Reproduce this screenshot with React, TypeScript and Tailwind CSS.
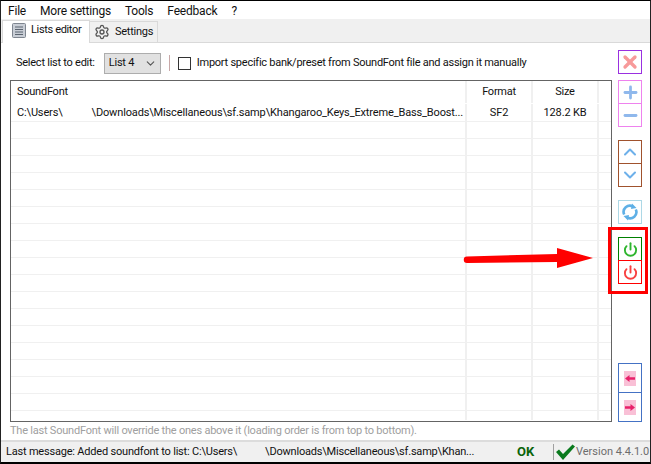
import { ChevronDown, ChevronUp, Plus, Minus, X, Power, Settings } from "lucide-react";
import type { ReactNode } from "react";

const emptyRows = Array.from({ length: 17 }, (_, i) => i);

function Row({ name, format, size, height = "h-[17px]", line = "border-[#f0f0f0]", text = "" }: { name?: ReactNode; format?: string; size?: string; height?: string; line?: string; text?: string }) {
  return (
    <div className={`flex shrink-0 ${height} border-b ${line}`}>
      <div className={`flex w-[456px] items-center overflow-hidden whitespace-nowrap border-r-2 border-[#f0f0f0] pl-[6px] ${text}`}>{name}</div>
      <div className={`flex w-[66px] items-center justify-center border-r-2 border-[#f0f0f0] ${text}`}>{format}</div>
      <div className={`flex w-[66px] items-center justify-center border-r-2 border-[#f0f0f0] ${text}`}>{size}</div>
      <div className="flex-1" />
    </div>
  );
}

function SideButton({ border, children, className = "h-6" }: { border: string; children: ReactNode; className?: string }) {
  return (
    <div className={`flex w-6 items-center justify-center border ${border} ${className}`}>{children}</div>
  );
}

function PinkArrow({ d }: { d: string }) {
  return (
    <svg width="12" height="15" viewBox="0 0 12 15" className="bg-[#f9c0d6]">
      <path d={d} fill="#e8206a" />
    </svg>
  );
}

export default function App() {
  return (
    <div className="relative flex h-[464px] w-[651px] flex-col overflow-hidden border-x border-t border-b-2 border-x-[#222] border-t-black border-b-black bg-white font-['Roboto',sans-serif] text-[11px] tracking-[-0.25px] text-[#111]">
      <div className="flex h-[18px] shrink-0 items-center pl-[7px] pt-[2px] text-[12px] tracking-[-0.2px]">
        <span>File</span>
        <span className="ml-[14px]">More settings</span>
        <span className="ml-[14px]">Tools</span>
        <span className="ml-[14px]">Feedback</span>
        <span className="ml-[14px]">?</span>
      </div>

      <div className="flex h-[24px] shrink-0 items-end border-b border-[#d9d9d9] bg-[#f0f0f0] pl-[1px]">
        <div className="z-10 -mb-px flex h-[23px] w-[88px] items-center gap-[5px] whitespace-nowrap border border-b-0 border-[#d9d9d9] bg-white pb-[3px] pl-[9px] tracking-[-0.35px]">
          <svg width="14" height="15" viewBox="0 0 14 15" className="shrink-0">
            <rect x="0.5" y="0.5" width="13" height="14" rx="1" fill="#c9ced6" stroke="#7f8690" />
            <path d="M3 4h8M3 6.5h8M3 9h8M3 11.5h8" stroke="#5b6470" />
          </svg>
          <span>Lists editor</span>
        </div>
        <div className="flex h-[21px] w-[68px] items-center gap-[5px] whitespace-nowrap border border-b-0 border-l-0 border-[#d9d9d9] bg-[#f0f0f0] pl-[4px]">
          <Settings size={16} strokeWidth={2} className="shrink-0 text-[#555]" />
          <span>Settings</span>
        </div>
      </div>

      <div className="flex min-h-0 flex-1">
        <div className="flex w-[611px] shrink-0 flex-col pl-[9px]">
          <div className="flex h-[37px] shrink-0 items-center pl-[6px] pt-[3px]">
            <span className="pt-[1px]">Select list to edit:</span>
            <div className="ml-[9px] flex h-[21px] w-[57px] items-center justify-between border border-[#adadad] bg-[#e1e1e1] pl-[4px] pr-[3px]">
              <span>List 4</span>
              <ChevronDown size={13} className="text-[#555]" />
            </div>
            <div className="ml-[8px] h-[16px] w-px bg-[#c8a8a8]" />
            <div className="ml-[8px] h-[13px] w-[13px] border border-[#333] bg-white" />
            <span className="ml-[6px] pt-[1px]">Import specific bank/preset from SoundFont file and assign it manually</span>
          </div>

          <div className="flex h-[342px] w-[602px] shrink-0 flex-col overflow-hidden border border-[#646464]">
            <Row name="SoundFont" format="Format" size="Size" height="h-[23px]" line="border-transparent" text="pt-[1px]" />
            <Row
              name={
                <>
                  <span>C:\Users\</span>
                  <span className="ml-[29px]">\Downloads\Miscellaneous\sf.samp\Khangaroo_Keys_Extreme_Bass_Boost...</span>
                </>
              }
              format="SF2"
              size="128.2 KB"
              height="h-[18px]"
              text="pt-[2px] tracking-[-0.15px]"
            />
            {emptyRows.map((i) => (
              <Row key={i} />
            ))}
            <Row height="flex-1" line="border-transparent" />
          </div>

          <div className="flex flex-1 items-center tracking-[-0.22px] text-[#a0a0a0]">
            The last SoundFont will override the ones above it (loading order is from top to bottom).
          </div>
        </div>

        <div className="flex flex-col pl-[6px] pt-[7px]">
          <SideButton border="border-[#9a30e0]">
            <X size={20} strokeWidth={4} className="text-[#f79a9a]" />
          </SideButton>
          <SideButton border="border-[#ee82ee]" className="mt-[6px] h-6">
            <Plus size={19} strokeWidth={3.5} className="text-[#8fb8ec]" />
          </SideButton>
          <SideButton border="border-[#ee82ee]" className="-mt-px h-6">
            <Minus size={19} strokeWidth={3.5} className="text-[#8fb8ec]" />
          </SideButton>
          <SideButton border="border-[#a0522d]" className="mt-[13px] h-6">
            <ChevronUp size={20} strokeWidth={2.4} className="text-[#6db0ea]" />
          </SideButton>
          <SideButton border="border-[#a0522d]" className="-mt-px h-6">
            <ChevronDown size={20} strokeWidth={2.4} className="text-[#6db0ea]" />
          </SideButton>
          <SideButton border="border-[#add8e6]" className="mt-[13px] h-6">
            <svg width="18" height="18" viewBox="0 0 18 18" fill="none">
              <path d="M3.2 11.5A6.2 6.2 0 0 1 12 3.6" stroke="#5fb0e6" strokeWidth="2.6" />
              <path d="M14.8 6.5A6.2 6.2 0 0 1 6 14.4" stroke="#5fb0e6" strokeWidth="2.6" />
              <path d="M11 0.5L15.5 5L10 6Z" fill="#5fb0e6" />
              <path d="M7 17.5L2.5 13L8 12Z" fill="#5fb0e6" />
            </svg>
          </SideButton>
          <SideButton border="border-[#008000]" className="mt-[13px] h-6">
            <Power size={15} strokeWidth={3} className="text-[#2eb52e]" />
          </SideButton>
          <SideButton border="border-[#ff0000]" className="-mt-px h-6">
            <Power size={15} strokeWidth={3} className="text-[#f84040]" />
          </SideButton>
          <SideButton border="border-[#4472c4]" className="mt-[79px] h-[30px]">
            <PinkArrow d="M1 7.5L5.5 4V6.2H11V8.8H5.5V11Z" />
          </SideButton>
          <SideButton border="border-[#4472c4]" className="-mt-px h-[30px]">
            <PinkArrow d="M11 7.5L6.5 4V6.2H1V8.8H6.5V11Z" />
          </SideButton>
        </div>
      </div>

      <div className="flex h-[22px] shrink-0 items-center whitespace-nowrap border-t-2 border-[#dcdcdc] bg-[#f0f0f0] pl-[5px]">
        <div className="w-[511px] overflow-hidden tracking-[-0.2px]">
          <span>Last message: Added soundfont to list: C:\Users\</span>
          <span className="ml-[28px]">\Downloads\Miscellaneous\sf.samp\Khan...</span>
        </div>
        <span className="w-[36px] text-[13px] font-bold tracking-normal text-[#0a640a]">OK</span>
        <div className="h-[16px] w-px bg-[#a0a0a0]" />
        <svg width="21" height="16" viewBox="0 0 21 16" className="ml-[1px] shrink-0">
          <path d="M1 8L4 5.5L8 10L17.5 0.5L20 2.5L8 16Z" fill="#0a7a1e" />
        </svg>
        <span className="text-[#6d6d6d] tracking-normal">Version 4.4.1.0</span>
      </div>

      {/* annotation drawn over the window */}
      <svg className="absolute left-[462px] top-[245px]" width="134" height="26" viewBox="0 0 134 26">
        <path d="M4 10.5 L94 8 L94 2 L130 12 L94 22 L94 16 L4 17 A3.2 3.2 0 0 1 4 10.5 Z" fill="#ff0000" />
      </svg>
      <div className="absolute left-[607px] top-[226px] h-[67px] w-[40px] border-[3px] border-[#ff0000]" />
    </div>
  );
}
